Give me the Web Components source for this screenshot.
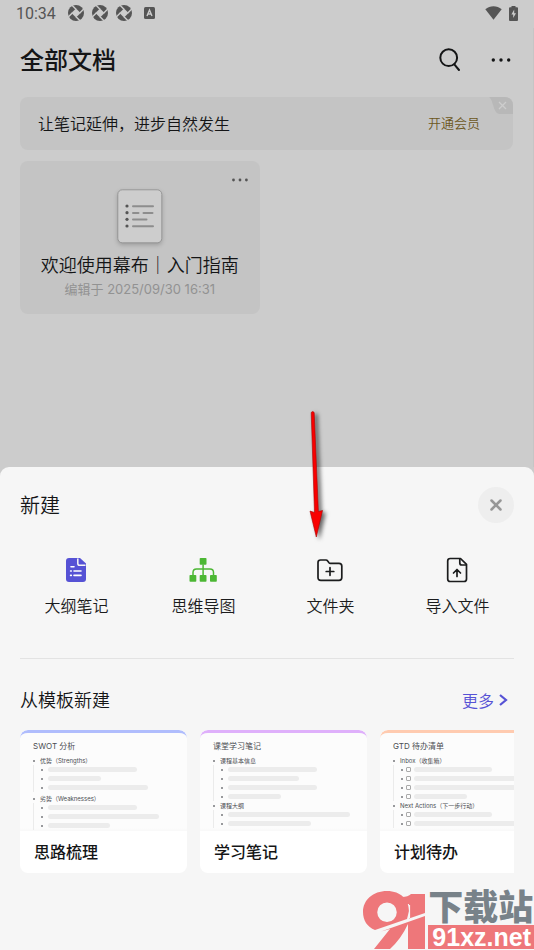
<!DOCTYPE html>
<html lang="zh-CN">
<head>
<meta charset="utf-8">
<meta name="viewport" content="width=device-width, initial-scale=1">
<title>全部文档</title>
<style>
  html, body { margin: 0; }
  body {
    font-family: Inter, "Noto Sans CJK SC", sans-serif;
    color: #141516;
    background: #ccc;
  }
</style>
</head>
<body>
<notes-app>
  <status-bar slot="status" time="10:34"></status-bar>
  <page-header slot="page">全部文档</page-header>
  <member-banner slot="page">让笔记延伸，进步自然发生<span slot="action">开通会员</span></member-banner>
  <doc-grid slot="page">
    <doc-card>欢迎使用幕布｜入门指南<span slot="meta">编辑于 2025/09/30 16:31</span></doc-card>
  </doc-grid>
  <create-sheet slot="sheet" heading="新建">
    <create-action slot="actions" icon="outline">大纲笔记</create-action>
    <create-action slot="actions" icon="mind">思维导图</create-action>
    <create-action slot="actions" icon="folder">文件夹</create-action>
    <create-action slot="actions" icon="import">导入文件</create-action>
    <template-list heading="从模板新建" more="更多">
      <template-card style="--accent:#b0bdfd" heading="SWOT 分析">
        <outline-section heading="优势（Strengths）" lines="89,53,100"></outline-section>
        <outline-section heading="劣势（Weaknesses）" lines="89,111,62"></outline-section>
        <span slot="name">思路梳理</span>
      </template-card>
      <template-card style="--accent:#dfb0fb;--section-gap:0px" heading="课堂学习笔记">
        <outline-section heading="课程基本信息" lines="89,71,89,53"></outline-section>
        <outline-section heading="课程大纲" lines="122,83"></outline-section>
        <span slot="name">学习笔记</span>
      </template-card>
      <template-card style="--accent:#ffcbb0;--section-gap:0px" heading="GTD 待办清单">
        <outline-section todo heading="Inbox（收集箱）" lines="78,111,111,53"></outline-section>
        <outline-section todo heading="Next Actions（下一步行动）" lines="78,111"></outline-section>
        <span slot="name">计划待办</span>
      </template-card>
    </template-list>
  </create-sheet>
  <pointer-arrow slot="overlay"></pointer-arrow>
  <site-mark slot="overlay">下载站<span slot="domain">91xz.net</span></site-mark>
</notes-app>

<script>
const define = (name, render) => customElements.define(name, class extends HTMLElement {
  connectedCallback() {
    if (this.shadowRoot) return;
    this.attachShadow({ mode: 'open' }).innerHTML =
      `<style>
        *{box-sizing:border-box}
        button{font:inherit;color:inherit;background:none;border:0;padding:0;margin:0;cursor:pointer}
        a{color:inherit;text-decoration:none}
        h1,h2,h3,p{margin:0;font-weight:400}
        svg{display:block}
      </style>` + render(this);
  }
});

define('notes-app', () => `
<style>
  :host{display:flex;flex-direction:column;position:relative;min-height:100vh;overflow:hidden;background:#ccc}
  main{flex:1;display:flex;flex-direction:column;padding:0 20px;border-right:1px solid #c5c5c5}
</style>
<slot name="status"></slot>
<main><slot name="page"></slot></main>
<slot name="sheet"></slot>
<slot name="overlay"></slot>`);

const aperture = `
<svg width="16" height="16" viewBox="0 0 17 17" aria-hidden="true">
  <circle cx="8.5" cy="8.5" r="8.500" fill="#555"/>
  <path d="M8.5 3.600 13.400 8.5 8.5 13.400 3.600 8.5Z" fill="#ccc"/>
  <path d="M8.500 4.500 4 0M12.500 8.500 17 4M8.500 12.500 13 17M4.500 8.500 0 13" stroke="#ccc" stroke-width="1.500"/>
</svg>`;

define('status-bar', el => `
<style>
  :host{display:flex;align-items:center;height:28px;padding:0 16px;gap:12px;font:16px/28px Roboto,sans-serif;color:#555}
  .apps{display:flex;align-items:center;gap:8px}
  .right{display:flex;align-items:center;gap:7px;margin-left:auto}
  .kb{margin-left:4px}
  .right,.apps{padding-bottom:2px}
</style>
<span>${el.getAttribute('time')}</span>
<span class="apps">${aperture.repeat(3)}
  <svg class="kb" width="11" height="12" viewBox="0 0 11 12" aria-hidden="true"><rect width="11" height="12" rx="1.500" fill="#555"/><path d="M3 9 5.500 3 8 9M4 7h3" fill="none" stroke="#ccc" stroke-width="1.400"/></svg>
</span>
<span class="right">
  <svg width="17" height="14" viewBox="0 0 17 14" aria-hidden="true"><path d="M.3 3.200C5 -.7 12 -.7 16.700 3.200L8.500 13.800Z" fill="#555"/></svg>
  <svg width="9" height="15" viewBox="0 0 9 15" aria-hidden="true"><path d="M2.500 1.200V0h4v1.200H8q1 0 1 1V14q0 1-1 1H1q-1 0-1-1V2.200q0-1 1-1Z" fill="#555"/><path d="M5.200 3.500 2.400 8.500h1.800v3.500L7 7.200H5.200Z" fill="#ccc"/></svg>
</span>`);

define('page-header', () => `
<style>
  :host{display:flex;align-items:center;height:64px;gap:27px;margin-bottom:5px}
  h1{flex:1;font:500 24px/36px "Noto Sans CJK SC",sans-serif;padding-bottom:3px}
</style>
<h1><slot></slot></h1>
<button aria-label="搜索"><svg width="24" height="24" viewBox="0 0 24 24" fill="none" stroke="#141516" stroke-width="2" stroke-linecap="round"><circle cx="10.700" cy="9.700" r="8.400"/><path d="m16.300 16.400 4.700 5.600"/></svg></button>
<button aria-label="更多操作"><svg width="24" height="24" viewBox="0 0 24 24" fill="#141516"><circle cx="4.300" cy="12" r="1.700"/><circle cx="12" cy="12" r="1.700"/><circle cx="19.700" cy="12" r="1.700"/></svg></button>`);

define('member-banner', () => `
<style>
  :host{display:flex;align-items:center;justify-content:space-between;position:relative;height:53px;padding:0 33px 2px 18px;border-radius:8px;overflow:hidden;background:#c4c4c4;font:350 16px/24px "Noto Sans CJK SC",sans-serif;box-sizing:border-box}
  p{font-weight:350}
  .join{font-size:13px;color:#6c571c}
  .close{position:absolute;top:0;right:0}
</style>
<p><slot></slot></p>
<button class="join"><slot name="action"></slot></button>
<button class="close" aria-label="关闭"><svg width="24" height="17" viewBox="0 0 24 17"><path d="M0 0h24v17H11C4 17 5 4 0 0Z" fill="#b8b8b8"/><path d="m10 5 7 7m0-7-7 7" stroke="#cdcdcd" stroke-width="1.300"/></svg></button>`);

define('doc-grid', () => `
<style>:host{display:grid;grid-template-columns:1fr 1fr;gap:14px;margin-top:11px}</style>
<slot></slot>`);

define('doc-card', () => `
<style>
  :host{display:flex;flex-direction:column;align-items:center;position:relative;padding:28px 8px 15px;border-radius:8px;background:#c4c4c4;text-align:center}
  h2{font:350 18px/28px "Noto Sans CJK SC",sans-serif;margin-top:6px}
  p{font-size:13px;line-height:20px;color:#929292;margin-top:1px}
  .menu{position:absolute;top:11px;right:10px}
  .thumb{filter:drop-shadow(0 2px 2px #0003)}
</style>
<button class="menu" aria-label="文档操作"><svg width="20" height="16" viewBox="0 0 20 16" fill="#555"><circle cx="3.500" cy="8" r="1.400"/><circle cx="10" cy="8" r="1.400"/><circle cx="16.400" cy="8" r="1.400"/></svg></button>
<svg class="thumb" width="46" height="55" viewBox="0 0 46 55" aria-hidden="true">
  <rect x=".8" y=".8" width="44" height="53" rx="4.500" fill="#cdcdcd" stroke="#8b8b8b" stroke-width=".8"/>
  <g fill="#555"><circle cx="10" cy="17" r="1.600"/><circle cx="10" cy="23.700" r="1.600"/><circle cx="10" cy="30.300" r="1.600"/><circle cx="10" cy="37" r="1.600"/></g>
  <path d="M16 17.200h20M16 23.900h5.500m5 0h9M16 30.500h13.500M16 37.200h20" stroke="#8d8d8d" stroke-width="2" stroke-linecap="round"/>
</svg>
<h2><slot></slot></h2>
<p><slot name="meta"></slot></p>`);

define('create-sheet', el => `
<style>
  :host{display:block;padding:20px 20px 77px;border-radius:9px 9px 0 0;background:#f6f6f6}
  header{display:flex;align-items:center;justify-content:space-between;height:36px}
  h2{font:350 20px/30px "Noto Sans CJK SC",sans-serif;padding-bottom:1px}
  .close{display:grid;place-items:center;width:36px;height:36px;border-radius:50%;background:#eee}
  nav{display:grid;grid-template-columns:repeat(4,1fr);margin:33px -7px 0;padding-bottom:41px}
  hr{margin:0;border:0;border-top:1px solid #e3e3e3}
</style>
<header><h2>${el.getAttribute('heading')}</h2>
<button class="close" aria-label="关闭"><svg width="12" height="12" viewBox="0 0 12 12"><path d="m1.500 1.500 9 9m0-9-9 9" stroke="#979797" stroke-width="2.500" stroke-linecap="round"/></svg></button></header>
<nav><slot name="actions"></slot></nav>
<hr>
<slot></slot>`);

const icons = {
  outline: `<path d="M7 2h9l6 5.500V23q0 3-3 3H5q-3 0-3-3V5q0-3 3-3Z" fill="#5652d5"/>
    <path d="M13.800 2.500V7.500q0 1.800 1.800 1.800H21.500" fill="none" stroke="#f6f6f6" stroke-width="1.500"/>
    <path d="M7 10.700h3M10 15h7M10 19.400h7M6.600 15h.7M6.600 19.400h.7" stroke="#fff" stroke-width="1.600" stroke-linecap="round"/>`,
  mind: `<g fill="#4cb734"><rect x="8.700" y="2" width="6.800" height="6.800" rx=".8"/><rect x="-1.500" y="19" width="6.800" height="6.800" rx=".8"/><rect x="8.700" y="19" width="6.800" height="6.800" rx=".8"/><rect x="19" y="19" width="6.800" height="6.800" rx=".8"/></g>
    <path d="M12.100 8.500V19M2 19V16.500q0-3.500 3.500-3.500H19q3.500 0 3.500 3.500V19" fill="none" stroke="#4cb734" stroke-width="1.500"/>`,
  folder: `<g fill="none" stroke="#1b1c1d" stroke-width="1.700" stroke-linejoin="round"><path d="M2.500 4H8q1 0 1.500.8L11 6.700q.5.600 1.300.6H21q2.800 0 2.800 2.800V21.500q0 2.800-2.800 2.800H2.800Q0 24.300 0 21.500V6.500q0-2.500 2.500-2.500Z"/><path d="M12 11.700v7.600M8.200 15.500h7.600" stroke-linecap="round"/></g>`,
  import: `<g fill="none" stroke="#1b1c1d" stroke-width="1.700" stroke-linejoin="round"><path d="M5.200 2.500H15.500l6 5.800V23q0 2.500-2.500 2.500H5.200Q2.700 25.500 2.700 23V5q0-2.500 2.500-2.500Z"/><path d="M14.800 2.800V7q0 2 2 2h4.500"/><path d="M12 20.500V14M8.500 17 12 13.500l3.500 3.500" stroke-linecap="round"/></g>`
};

define('create-action', el => `
<style>
  :host{display:flex;justify-content:center}
  button{display:flex;flex-direction:column;align-items:center;gap:9px;font:350 16px/24px "Noto Sans CJK SC",sans-serif;color:#1b1c1d}
  svg{overflow:visible}
</style>
<button><svg width="24" height="28" viewBox="0 0 24 28" aria-hidden="true">${icons[el.getAttribute('icon')]}</svg><span><slot></slot></span></button>`);

define('template-list', el => `
<style>
  :host{display:block;padding-top:26px}
  header{display:flex;align-items:center;justify-content:space-between;padding-right:6px;margin-bottom:16px}
  h2{font:350 18px/29px "Noto Sans CJK SC",sans-serif}
  a{display:flex;align-items:center;gap:5px;font:350 16px/24px "Noto Sans CJK SC",sans-serif;color:#5652d5}
  .rail{display:flex;gap:13px;overflow:hidden}
</style>
<header><h2>${el.getAttribute('heading')}</h2>
<a href="#templates">${el.getAttribute('more')}<svg width="9" height="12" viewBox="0 0 9 12" aria-hidden="true"><path d="m1 1 6 5-6 5" fill="none" stroke="#5652d5" stroke-width="2.200"/></svg></a></header>
<div class="rail" id="templates"><slot></slot></div>`);

define('template-card', el => `
<style>
  :host{flex:0 0 167px}
  a{display:block;border-radius:8px;overflow:hidden;background:#fff}
  .preview{height:101px;padding:7px 0 0 13px;border-top:3px solid var(--accent);border-radius:8px 8px 0 0;overflow:hidden;background:linear-gradient(#fcfcfc 95px,#f6f6f6 100px)}
  h3{font:8px/12px Inter,"Noto Sans CJK SC",sans-serif;color:#4b4d52;margin-bottom:4px}
  .sections{display:flex;flex-direction:column;gap:var(--section-gap,2px)}
  .name{padding:8px 14px 10px;font:500 16px/24px "Noto Sans CJK SC",sans-serif}
</style>
<a href="#templates">
  <div class="preview"><h3>${el.getAttribute('heading')}</h3><div class="sections"><slot></slot></div></div>
  <div class="name"><slot name="name"></slot></div>
</a>`);

define('outline-section', el => `
<style>
  :host{display:block;flex:none;color:#4b4d52}
  .head,li{display:flex;align-items:center;height:9px}
  .head{gap:5px;font:6px/9px Inter,"Noto Sans CJK SC",sans-serif;white-space:nowrap}
  .head::before,li::before{content:"";flex:none;width:2px;height:2px;border-radius:1px;background:#77797d}
  ul{list-style:none;margin:0;padding:0 0 0 7px;border-left:1px solid #ebebeb}
  li{gap:5px}
  i{flex:none;height:5px;border-radius:3px;background:#ececec}
  b{flex:none;width:5px;height:5px;border:1px solid #aaa;border-radius:1px}
  :host([todo]) li{gap:3px}
</style>
<div class="head">${el.getAttribute('heading')}</div>
<ul>${el.getAttribute('lines').split(',').map(w => `<li>${el.hasAttribute('todo') ? '<b></b>' : ''}<i style="width:${w}px"></i></li>`).join('')}</ul>`);

define('pointer-arrow', () => `
<style>
  :host{position:absolute;left:300px;top:406px;pointer-events:none}
  svg{filter:drop-shadow(3px 2px 2px #0009)}
</style>
<svg width="40" height="140" viewBox="0 0 40 140" aria-hidden="true"><path d="M11.200 6.500q1.500-2 3 0L18.400 105.500 22.500 104.500 16.300 131 10 105 14.500 106.500Z" fill="#f80000" stroke="#a80000" stroke-width=".6"/></svg>`);

define('site-mark', () => `
<style>
  :host{position:absolute;right:0;bottom:0;display:flex;align-items:flex-end;gap:3px;padding-bottom:1px;pointer-events:none;font-family:"Liberation Sans","Noto Sans CJK SC",sans-serif}
  .name{font-size:35px;font-weight:900;line-height:35px;color:#788289;white-space:nowrap}
  .domain{font-size:25px;font-weight:700;line-height:24px;color:#fff;background:#ee777a;padding:0 3px 0 4px}
</style>
<svg width="62" height="58" viewBox="0 0 62 58" role="img" aria-label="91">
  <path fill-rule="evenodd" d="M24 0C38 0 46 9 46 20L44 28 12 39C4 36 0 29 0 21 0 9 10 0 24 0ZM24 11.500A9.700 9.700 0 1 0 24 31 9.700 9.700 0 1 0 24 11.500Z" fill="#ee777a"/>
  <path d="M39 6Q45 6 48 3H62V22L46 27.500V13H41Z" fill="#ee777a"/>
  <path d="M18 40.500 62 25V58H45V33Q38 48 27 58H11L27 38Z" fill="#ee777a"/>
  <path d="M46.500 14V27" stroke="#f6f6f6" stroke-width="1.200"/>
</svg>
<div><div class="name"><slot></slot></div><div class="domain"><slot name="domain"></slot></div></div>`);
</script>
</body>
</html>
